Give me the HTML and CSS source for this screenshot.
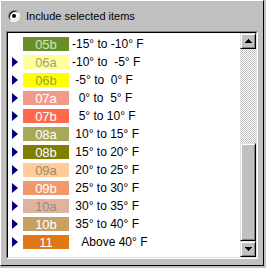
FILE: index.html
```html
<!DOCTYPE html>
<html lang="en">
<head>
    <meta charset="UTF-8">
    <title>Temperature ranges</title>
    <link rel="stylesheet" href="styles.css">
</head>
<body>
    <div class="panel">
        <label class="option">
            <span class="radio"></span>
            <span class="option-text">Include selected items</span>
        </label>

        <div class="listbox">
            <div class="listbox-inner">
                <div class="items">
                    <div class="item">
                        <span class="marker hidden"></span>
                        <span class="swatch c05b">05b</span>
                        <span class="range">-15° to -10° F</span>
                    </div>
                    <div class="item">
                        <span class="marker"></span>
                        <span class="swatch c06a">06a</span>
                        <span class="range">-10° to  -5° F</span>
                    </div>
                    <div class="item">
                        <span class="marker"></span>
                        <span class="swatch c06b">06b</span>
                        <span class="range"> -5° to  0° F</span>
                    </div>
                    <div class="item">
                        <span class="marker"></span>
                        <span class="swatch c07a">07a</span>
                        <span class="range">  0° to  5° F</span>
                    </div>
                    <div class="item">
                        <span class="marker"></span>
                        <span class="swatch c07b">07b</span>
                        <span class="range">  5° to 10° F</span>
                    </div>
                    <div class="item">
                        <span class="marker"></span>
                        <span class="swatch c08a">08a</span>
                        <span class="range"> 10° to 15° F</span>
                    </div>
                    <div class="item">
                        <span class="marker"></span>
                        <span class="swatch c08b">08b</span>
                        <span class="range"> 15° to 20° F</span>
                    </div>
                    <div class="item">
                        <span class="marker"></span>
                        <span class="swatch c09a">09a</span>
                        <span class="range"> 20° to 25° F</span>
                    </div>
                    <div class="item">
                        <span class="marker"></span>
                        <span class="swatch c09b">09b</span>
                        <span class="range"> 25° to 30° F</span>
                    </div>
                    <div class="item">
                        <span class="marker"></span>
                        <span class="swatch c10a">10a</span>
                        <span class="range"> 30° to 35° F</span>
                    </div>
                    <div class="item">
                        <span class="marker"></span>
                        <span class="swatch c10b">10b</span>
                        <span class="range"> 35° to 40° F</span>
                    </div>
                    <div class="item">
                        <span class="marker"></span>
                        <span class="swatch c11">11</span>
                        <span class="range">   Above 40° F</span>
                    </div>
                </div>

                <div class="scrollbar">
                    <div class="sb-btn">
                        <svg width="7" height="4" viewBox="0 0 7 4">
                            <rect x="3" y="0" width="1" height="1"/>
                            <rect x="2" y="1" width="3" height="1"/>
                            <rect x="1" y="2" width="5" height="1"/>
                            <rect x="0" y="3" width="7" height="1"/>
                        </svg>
                    </div>
                    <div class="sb-track"></div>
                    <div class="sb-btn sb-thumb"></div>
                    <div class="sb-btn">
                        <svg width="7" height="4" viewBox="0 0 7 4">
                            <rect x="0" y="0" width="7" height="1"/>
                            <rect x="1" y="1" width="5" height="1"/>
                            <rect x="2" y="2" width="3" height="1"/>
                            <rect x="3" y="3" width="1" height="1"/>
                        </svg>
                    </div>
                </div>
            </div>
        </div>
    </div>
</body>
</html>
```

FILE: styles.css
```css
* {
    margin: 0;
    padding: 0;
    box-sizing: border-box;
}

body {
    font-family: 'Liberation Sans', Arial, sans-serif;
    background: #c0c0c0;
    width: 266px;
    height: 268px;
    overflow: hidden;
}

.panel {
    width: 264px;
    height: 266px;
    border: 1px solid;
    border-color: #fff #000 #000 #fff;
}

.option {
    display: flex;
    align-items: center;
    gap: 6px;
    height: 12px;
    margin: 9px 0 9px 7px;
    font-size: 11px;
    color: #000;
}

.radio {
    position: relative;
    width: 12px;
    height: 12px;
    border-radius: 50%;
    background: #fff;
    border: 1px solid;
    border-color: #808080 #fff #fff #808080;
    box-shadow: inset 1px 1px #000, inset -1px -1px #dfdfdf;
}

.radio::after {
    content: "";
    position: absolute;
    left: 3px;
    top: 3px;
    width: 4px;
    height: 4px;
    border-radius: 50%;
    background: #000;
}

.listbox {
    width: 252px;
    height: 228px;
    margin-left: 5px;
    border: 1px solid;
    border-color: #808080 #fff #fff #808080;
}

.listbox-inner {
    display: flex;
    height: 100%;
    background: #fff;
    border: 1px solid;
    border-color: #000 #dfdfdf #dfdfdf #000;
}

.items {
    flex: 1;
    padding-top: 2px;
}

.item {
    display: flex;
    align-items: center;
    height: 18px;
}

.marker {
    width: 0;
    height: 0;
    margin-left: 4px;
    border-left: 6px solid #000080;
    border-top: 5px solid transparent;
    border-bottom: 5px solid transparent;
}

.marker.hidden {
    visibility: hidden;
}

.swatch {
    display: flex;
    align-items: center;
    justify-content: center;
    width: 46px;
    height: 14px;
    margin-left: 5px;
    font-size: 13px;
    color: #fff;
}

.range {
    margin-left: 3px;
    white-space: pre;
    font-size: 12px;
    color: #000;
}

.c05b { background: #6a8f2a; color: #d0e4c0; }
.c06a { background: #ffff99; color: #a0a080; }
.c06b { background: #ffff00; color: #a0a040; }
.c07a { background: #f29a8a; }
.c07b { background: #ff6a4a; }
.c08a { background: #a8a858; }
.c08b { background: #808000; }
.c09a { background: #ffcc99; color: #a08868; }
.c09b { background: #f0986a; }
.c10a { background: #dcb4a0; color: #a08878; }
.c10b { background: #c8a064; }
.c11 { background: #e07818; }

.scrollbar {
    display: flex;
    flex-direction: column;
    width: 16px;
}

.sb-btn {
    display: flex;
    align-items: center;
    justify-content: center;
    height: 16px;
    background: #c0c0c0;
    border: 1px solid;
    border-color: #dfdfdf #000 #000 #dfdfdf;
    box-shadow: inset 1px 1px #fff, inset -1px -1px #808080;
}

.sb-track {
    flex: 1;
    background: repeating-conic-gradient(#c0c0c0 0 25%, #fff 0 50%) 0 0 / 2px 2px;
}

.sb-thumb {
    height: 98px;
}
```
